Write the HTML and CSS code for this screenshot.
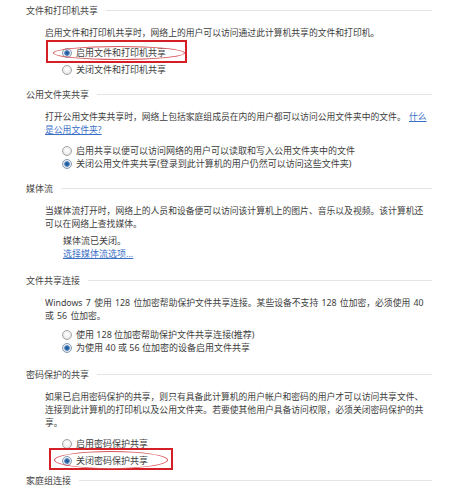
FILE: index.html
```html
<!DOCTYPE html>
<html lang="zh-CN">
<head>
<meta charset="utf-8">
<title>高级共享设置</title>
<link rel="stylesheet" href="styles.css">
</head>
<body>
<div class="page">
  <section class="section first">
    <h2 class="title">文件和打印机共享</h2>
    <p class="desc">启用文件和打印机共享时，网络上的用户可以访问通过此计算机共享的文件和打印机。</p>
    <div class="opts tall">
      <label class="opt"><input type="radio" name="fp" checked><span>启用文件和打印机共享</span><i class="box box-1"></i><i class="ring ring-1"></i></label>
      <label class="opt"><input type="radio" name="fp"><span>关闭文件和打印机共享</span></label>
    </div>
  </section>

  <section class="section">
    <h2 class="title">公用文件夹共享</h2>
    <p class="desc">打开公用文件夹共享时，网络上包括家庭组成员在内的用户都可以访问公用文件夹中的文件。 <a href="#">什么是公用文件夹?</a></p>
    <div class="opts">
      <label class="opt"><input type="radio" name="pf"><span>启用共享以便可以访问网络的用户可以读取和写入公用文件夹中的文件</span></label>
      <label class="opt"><input type="radio" name="pf" checked><span>关闭公用文件夹共享(登录到此计算机的用户仍然可以访问这些文件夹)</span></label>
    </div>
  </section>

  <section class="section">
    <h2 class="title">媒体流</h2>
    <p class="desc">当媒体流打开时，网络上的人员和设备便可以访问该计算机上的图片、音乐以及视频。该计算机还可以在网络上查找媒体。</p>
    <div class="status">
      <p>媒体流已关闭。</p>
      <a href="#">选择媒体流选项...</a>
    </div>
  </section>

  <section class="section wide">
    <h2 class="title">文件共享连接</h2>
    <p class="desc">Windows 7 使用 128 位加密帮助保护文件共享连接。某些设备不支持 128 位加密，必须使用 40 或 56 位加密。</p>
    <div class="opts near">
      <label class="opt"><input type="radio" name="enc"><span>使用 128 位加密帮助保护文件共享连接(推荐)</span></label>
      <label class="opt"><input type="radio" name="enc" checked><span>为使用 40 或 56 位加密的设备启用文件共享</span></label>
    </div>
  </section>

  <section class="section wide">
    <h2 class="title">密码保护的共享</h2>
    <p class="desc">如果已启用密码保护的共享，则只有具备此计算机的用户帐户和密码的用户才可以访问共享文件、连接到此计算机的打印机以及公用文件夹。若要使其他用户具备访问权限，必须关闭密码保护的共享。</p>
    <div class="opts tall far">
      <label class="opt"><input type="radio" name="pw"><span>启用密码保护共享</span></label>
      <label class="opt"><input type="radio" name="pw" checked><span>关闭密码保护共享</span><i class="box box-2"></i><i class="ring ring-2"></i></label>
    </div>
  </section>

  <section class="section last">
    <h2 class="title">家庭组连接</h2>
  </section>
</div>
</body>
</html>
```

FILE: styles.css
```css
html, body {
  margin: 0;
  padding: 0;
  height: 488px;
  overflow: hidden;
  background: #ffffff;
}

body {
  font-family: "Noto Sans", "Noto Sans CJK SC", sans-serif;
  font-size: 9px;
  line-height: 13px;
  color: #3d3d3d;
}

.page {
  padding: 4px 21px 0 26px;
}

.section {
  margin-top: 12px;
}

.section.first {
  margin-top: 0;
}

.section.wide {
  margin-top: 14px;
}

.section.last {
  margin-top: 7px;
}

.title {
  display: flex;
  align-items: center;
  gap: 8px;
  margin: 0;
  font-size: 9px;
  font-weight: normal;
  line-height: 13px;
  color: #444444;
}

.title::after {
  content: "";
  flex: 1;
  height: 1px;
  background: #e4e4e4;
}

.desc {
  margin: 10px 0 0 19px;
  max-width: 382px;
  font-size: 8.8px;
  word-spacing: 1px;
}

.desc a,
.status a {
  color: #3b6fc6;
  text-decoration: underline;
}

.status {
  margin: 3px 0 0 37px;
}

.status p {
  margin: 0;
}

.status a {
  display: block;
}

.opts {
  display: flex;
  flex-direction: column;
  margin: 7px 0 0 36px;
}

.opts.tall {
  gap: 4px;
  margin-top: 6px;
}

.opts.near {
  margin-top: 5px;
}

.opts.far {
  margin-top: 7px;
}

.opt {
  position: relative;
  display: flex;
  align-items: center;
  gap: 4px;
  height: 13px;
}

.opt input {
  appearance: none;
  -webkit-appearance: none;
  margin: 0;
  width: 10px;
  height: 10px;
  flex: none;
  border: 1px solid #a3a3a3;
  border-radius: 50%;
  background: radial-gradient(circle at 50% 40%, #ffffff 0, #f2f2f2 45%, #d6d6d6 100%);
  box-sizing: border-box;
}

.opt input:checked {
  border-color: #8a9bb0;
  background:
    radial-gradient(circle, #1f4f86 0, #2f6aa8 1.6px, #6d9acb 2.6px, rgba(255,255,255,0) 3.2px),
    radial-gradient(circle at 50% 40%, #ffffff 0, #eef2f6 45%, #cfd8e2 100%);
}

.box {
  position: absolute;
  border: 2px solid #d41f26;
  box-sizing: border-box;
  pointer-events: none;
}

.box-1 {
  left: -16px;
  top: -6px;
  width: 141px;
  height: 23px;
}

.box-2 {
  left: -13px;
  top: -6px;
  width: 124px;
  height: 22px;
}

.ring {
  position: absolute;
  border: 1px solid #d9565b;
  border-radius: 50%;
  box-sizing: border-box;
  pointer-events: none;
}

.ring-1 {
  left: -9px;
  top: 0;
  width: 132px;
  height: 14px;
}

.ring-2 {
  left: -8px;
  top: -3px;
  width: 114px;
  height: 18px;
}
```
